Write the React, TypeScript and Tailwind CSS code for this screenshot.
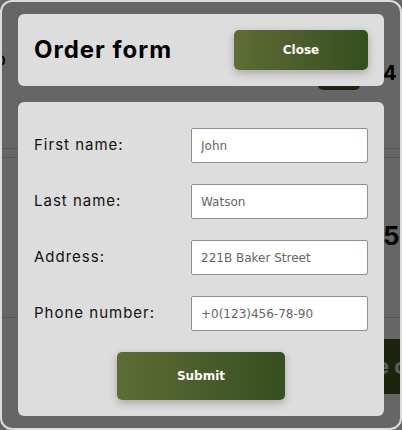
import React from 'react';

const fields = [
  { label: 'First name:', value: 'John' },
  { label: 'Last name:', value: 'Watson' },
  { label: 'Address:', value: '221B Baker Street' },
  { label: 'Phone number:', value: '+0(123)456-78-90' },
];

const btn =
  'rounded-[5px] bg-gradient-to-r from-[#5f6c35] to-[#354f1f] text-white font-bold text-[12px] shadow-[0_3px_8px_rgba(0,0,0,0.25)] [font-family:"DejaVu_Sans",Verdana,sans-serif]';

const App: React.FC = () => {
  return (
    <div className="relative w-[402px] h-[430px] overflow-hidden bg-white [font-family:Inter,sans-serif]">
      {/* page underneath the modal */}
      <div className="flex flex-col">
        <div className="relative h-[149px] border-b border-[#d6d6d6]">
          <span className="absolute left-[-6px] top-[44px] text-[20px] text-black">o</span>
          <span className="absolute left-[383px] top-[58px] text-[20px] font-bold text-black">4</span>
          <div className="absolute left-[318px] top-[40px] w-[42px] h-[50px] rounded-[5px] bg-[#4a5a28]" />
        </div>
        <div className="h-[9px] border-b border-[#d6d6d6]" />
        <div className="relative h-[160px] border-b border-[#d6d6d6]">
          <span className="absolute left-[383px] top-[58px] text-[26px] font-bold text-black">5</span>
        </div>
        <div className="relative h-[110px]">
          <div className="absolute left-[300px] top-[21px] w-[160px] h-[55px] bg-[#495a24] flex items-center pl-[30px] whitespace-nowrap text-[#e8e8e8] text-[22px] font-bold">
            Place order
          </div>
        </div>
      </div>

      {/* overlay + modal */}
      <div className="absolute inset-0 bg-black/60">
        <div className="h-full rounded-[12px] border-2 border-[#dcdcdc] px-4 pt-3 pb-3 flex flex-col gap-4">
          <div className="h-[72px] shrink-0 rounded-[6px] bg-[#dddddd] flex items-center justify-between pl-4 pr-4">
            <h1 className="text-[24px] font-bold text-black tracking-[1px]">Order form</h1>
            <button className={`${btn} w-[134px] h-[40px]`}>Close</button>
          </div>
          <div className="flex-1 rounded-[6px] bg-[#dddddd] px-4 pt-[26px] flex flex-col">
            <div className="flex flex-col gap-[21px]">
              {fields.map((f) => (
                <div key={f.label} className="flex items-center justify-between h-[35px]">
                  <span className="text-[15px] text-[#111] tracking-[1px]">{f.label}</span>
                  <input
                    readOnly
                    defaultValue={f.value}
                    className="w-[177px] h-[35px] rounded-[2px] border border-[#8f8c9f] bg-white px-[9px] text-[12px] text-[#666] outline-none [font-family:'DejaVu_Sans',Verdana,sans-serif]"
                  />
                </div>
              ))}
            </div>
            <div className="flex justify-center mt-[21px]">
              <button className={`${btn} w-[168px] h-[48px]`}>Submit</button>
            </div>
          </div>
        </div>
      </div>
    </div>
  );
};

export default App;
